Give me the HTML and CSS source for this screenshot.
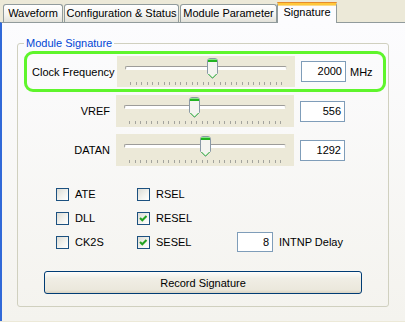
FILE: index.html
```html
<!DOCTYPE html>
<html lang="en">
<head>
  <meta charset="UTF-8">
  <title>Signature</title>
  <link rel="stylesheet" href="styles.css">
</head>
<body>
  <!-- Tab strip -->
  <div class="tabs">
    <div class="tab tab-wave">Waveform</div>
    <div class="tab tab-config">Configuration &amp; Status</div>
    <div class="tab tab-module">Module Parameter</div>
    <div class="tab active">Signature</div>
  </div>

  <div class="page">
    <fieldset class="group">
      <legend>Module Signature</legend>

      <!-- Clock frequency, highlighted -->
      <div class="clock-box">
        <span class="clock-label">Clock Frequency</span>
        <div class="slider">
          <div class="track"></div>
          <div class="ticks"></div>
          <svg class="thumb" style="left: 90px" width="11" height="21" viewBox="0 0 11 21">
            <path d="M0.5,3 Q0.5,0.5 3,0.5 H8 Q10.5,0.5 10.5,3 V15.5 L5.5,20.5 L0.5,15.5 Z" fill="#f4f4f0" stroke="#8a99a6"/>
            <rect x="1" y="1" width="9" height="1" fill="#8be58b"/>
            <rect x="1" y="2" width="9" height="2" fill="#21b421"/>
            <path d="M1.5,16 L5.5,20 L9.5,16" fill="none" stroke="#46c846"/>
          </svg>
        </div>
        <div class="value">2000</div>
        <span class="unit">MHz</span>
      </div>

      <div class="row">
        <span class="row-label">VREF</span>
        <div class="slider">
          <div class="track"></div>
          <div class="ticks"></div>
          <svg class="thumb" style="left: 73px" width="11" height="21" viewBox="0 0 11 21">
            <path d="M0.5,3 Q0.5,0.5 3,0.5 H8 Q10.5,0.5 10.5,3 V15.5 L5.5,20.5 L0.5,15.5 Z" fill="#f4f4f0" stroke="#8a99a6"/>
            <rect x="1" y="1" width="9" height="1" fill="#8be58b"/>
            <rect x="1" y="2" width="9" height="2" fill="#21b421"/>
            <path d="M1.5,16 L5.5,20 L9.5,16" fill="none" stroke="#46c846"/>
          </svg>
        </div>
        <div class="value">556</div>
      </div>

      <div class="row row-datan">
        <span class="row-label">DATAN</span>
        <div class="slider">
          <div class="track"></div>
          <div class="ticks"></div>
          <svg class="thumb" style="left: 84px" width="11" height="21" viewBox="0 0 11 21">
            <path d="M0.5,3 Q0.5,0.5 3,0.5 H8 Q10.5,0.5 10.5,3 V15.5 L5.5,20.5 L0.5,15.5 Z" fill="#f4f4f0" stroke="#8a99a6"/>
            <rect x="1" y="1" width="9" height="1" fill="#8be58b"/>
            <rect x="1" y="2" width="9" height="2" fill="#21b421"/>
            <path d="M1.5,16 L5.5,20 L9.5,16" fill="none" stroke="#46c846"/>
          </svg>
        </div>
        <div class="value">1292</div>
      </div>

      <!-- Signature flags -->
      <div class="checks">
        <label class="check"><span class="box"></span>ATE</label>
        <label class="check"><span class="box"></span>RSEL</label>
        <span></span>

        <label class="check"><span class="box"></span>DLL</label>
        <label class="check"><span class="box checked"><svg width="11" height="11" viewBox="0 0 11 11"><path d="M2,5 L4.3,7.3 L8.5,3" fill="none" stroke="#21a121" stroke-width="2"/></svg></span>RESEL</label>
        <span></span>

        <label class="check"><span class="box"></span>CK2S</label>
        <label class="check"><span class="box checked"><svg width="11" height="11" viewBox="0 0 11 11"><path d="M2,5 L4.3,7.3 L8.5,3" fill="none" stroke="#21a121" stroke-width="2"/></svg></span>SESEL</label>
        <div class="delay">
          <div class="value small">8</div>
          <span>INTNP Delay</span>
        </div>
      </div>

      <button class="record-btn">Record Signature</button>
    </fieldset>
  </div>
</body>
</html>
```

FILE: styles.css
```css
body {
  margin: 0;
  width: 405px;
  height: 322px;
  overflow: hidden;
  font-family: "Liberation Sans", Arial, sans-serif;
  font-size: 11px;
  color: #000;
  background-color: #ece9d8;
}

.tabs {
  display: flex;
  align-items: flex-end;
  height: 22px;
  padding-left: 3px;
  gap: 1px;
}

.tab {
  box-sizing: border-box;
  height: 18px;
  border: 1px solid #919b9c;
  border-bottom: none;
  border-radius: 3px 3px 0 0;
  background-image: linear-gradient(#ffffff, #f3f3ef 60%, #e2e1d9);
  text-align: center;
  line-height: 17px;
}

.tab-wave { width: 60px; }
.tab-config { width: 115px; }
.tab-module { width: 97px; }

.tab.active {
  position: relative;
  z-index: 1;
  width: 60px;
  height: 21px;
  margin-left: -1px;
  margin-bottom: -1px;
  border-top: 3px solid #ffc83c;
  box-shadow: inset 0 1px 0 #fbdb8b;
  background: #fcfcfe;
  line-height: 14px;
}

.tab.active::before {
  content: "";
  position: absolute;
  left: -1px;
  right: -1px;
  top: -3px;
  height: 1px;
  background: #e68b2c;
  border-radius: 3px 3px 0 0;
}

.page {
  height: 299px;
  border-top: 1px solid #919b9c;
  border-left: 2px solid #3169d8;
  background-image: linear-gradient(#fcfcfe, #f4f3ee);
  padding-top: 14px;
  box-sizing: border-box;
}

.group {
  box-sizing: border-box;
  width: 372px;
  height: 270px;
  margin: 0 0 0 15px;
  padding: 0;
  border: 1px solid #d0d0bf;
  border-radius: 3px;
}

.group legend {
  margin-left: 6px;
  padding: 0 2px;
  color: #0046d5;
  line-height: 13px;
}

.clock-box {
  box-sizing: border-box;
  display: flex;
  align-items: center;
  width: 362px;
  height: 41px;
  margin: 1px 0 0 6px;
  padding-left: 5px;
  border: 3px solid #5ff52c;
  border-radius: 9px;
}

.clock-label {
  width: 85px;
}

.slider {
  position: relative;
  flex: none;
  width: 178px;
  height: 32px;
  background-color: #ece9d8;
}

.clock-box .slider {
  height: 31px;
}

.track {
  position: absolute;
  left: 8px;
  top: 10px;
  box-sizing: border-box;
  width: 162px;
  height: 4px;
  border: 1px solid #9d9c99;
  border-right-color: #dedcd2;
  border-bottom-color: #ffffff;
  border-radius: 2px;
  background: #ffffff;
}

.ticks {
  position: absolute;
  left: 13px;
  top: 25px;
  width: 153px;
  height: 4px;
  background-image: repeating-linear-gradient(to right, #a3a39d 0 1px, transparent 1px 5.6px);
  background-size: 100% 3px;
  background-position: 0 1px;
  background-repeat: no-repeat;
}

.thumb {
  position: absolute;
  top: 2px;
}

.value {
  box-sizing: border-box;
  flex: none;
  width: 45px;
  height: 21px;
  margin-left: 6px;
  padding-right: 3px;
  border: 1px solid #7f9db9;
  background: #fff;
  text-align: right;
  line-height: 19px;
}

.unit {
  margin-left: 4px;
}

.row {
  display: flex;
  align-items: center;
  margin-top: 3px;
}

.row-datan {
  margin-top: 7px;
}

.row-label {
  box-sizing: border-box;
  width: 98px;
  padding-right: 6px;
  text-align: right;
}

.checks {
  display: grid;
  grid-template-columns: 81px 100px auto;
  grid-auto-rows: 24px;
  margin-top: 16px;
  padding-left: 38px;
}

.check {
  display: flex;
  align-items: center;
  gap: 6px;
}

.box {
  box-sizing: border-box;
  display: flex;
  align-items: center;
  justify-content: center;
  width: 13px;
  height: 13px;
  border: 1px solid #1c5180;
  background-image: linear-gradient(135deg, #dcdcd5, #f4f4f0 60%, #ffffff);
}

.delay {
  display: flex;
  align-items: center;
  gap: 6px;
}

.value.small {
  width: 36px;
  height: 20px;
  margin-left: 0;
  line-height: 18px;
}

.record-btn {
  display: block;
  width: 318px;
  height: 23px;
  margin: 17px 0 0 26px;
  border: 1px solid #003c74;
  border-radius: 3px;
  background-image: linear-gradient(#fdfdfb, #f0eee5 30%, #ebe8dc 85%, #d8d2c2);
  font-family: "Liberation Sans", Arial, sans-serif;
  font-size: 11px;
  color: #000;
  padding: 0;
}
```
